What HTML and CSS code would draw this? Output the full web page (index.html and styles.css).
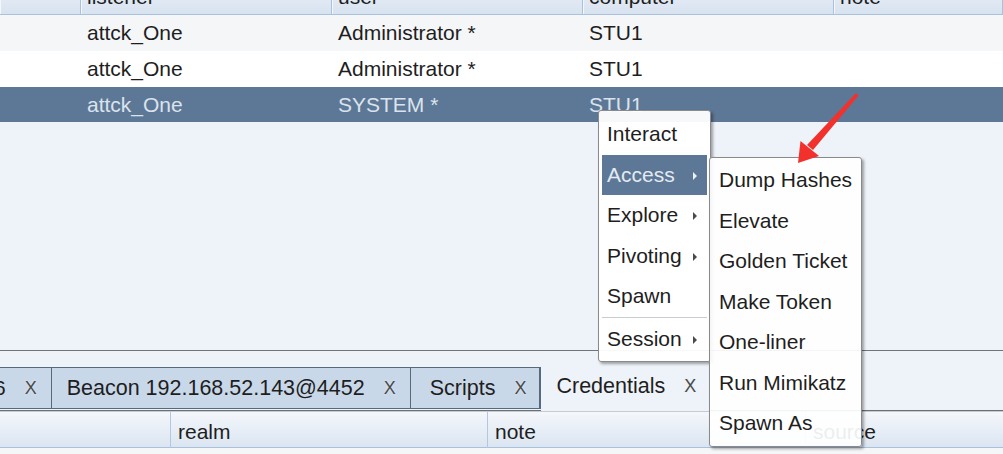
FILE: index.html
```html
<!DOCTYPE html>
<html>
<head>
<meta charset="utf-8">
<link rel="stylesheet" href="styles.css">
</head>
<body>
<div class="app">
  <div class="top-pane">
    <div class="row head">
      <div class="cell"></div>
      <div class="cell">listener</div>
      <div class="cell">user</div>
      <div class="cell">computer</div>
      <div class="cell">note</div>
    </div>
    <div class="row odd">
      <div class="cell"></div>
      <div class="cell">attck_One</div>
      <div class="cell">Administrator *</div>
      <div class="cell">STU1</div>
      <div class="cell"></div>
    </div>
    <div class="row even">
      <div class="cell"></div>
      <div class="cell">attck_One</div>
      <div class="cell">Administrator *</div>
      <div class="cell">STU1</div>
      <div class="cell"></div>
    </div>
    <div class="row selected">
      <div class="cell"></div>
      <div class="cell">attck_One</div>
      <div class="cell">SYSTEM *</div>
      <div class="cell">STU1</div>
      <div class="cell"></div>
    </div>
  </div>
  <div class="bottom-pane">
    <div class="tabstrip">
      <div class="tab first"><span class="tab-label">6</span><span class="tab-x">X</span></div>
      <div class="tab"><span class="tab-label">Beacon 192.168.52.143@4452</span><span class="tab-x">X</span></div>
      <div class="tab scripts"><span class="tab-label">Scripts</span><span class="tab-x">X</span></div>
      <div class="tab active"><span class="tab-label">Credentials</span><span class="tab-x">X</span></div>
    </div>
    <div class="row2 head2">
      <div class="cell2"></div>
      <div class="cell2">realm</div>
      <div class="cell2">note</div>
      <div class="cell2">source</div>
    </div>
  </div>
</div>

<div class="menu main-menu">
  <div class="item">Interact</div>
  <div class="item sub hl">Access<span class="arrow"></span></div>
  <div class="item sub">Explore<span class="arrow"></span></div>
  <div class="item sub">Pivoting<span class="arrow"></span></div>
  <div class="item">Spawn</div>
  <div class="sep"></div>
  <div class="item sub">Session<span class="arrow"></span></div>
</div>

<div class="menu sub-menu">
  <div class="item">Dump Hashes</div>
  <div class="item">Elevate</div>
  <div class="item">Golden Ticket</div>
  <div class="item">Make Token</div>
  <div class="item">One-liner</div>
  <div class="item">Run Mimikatz</div>
  <div class="item">Spawn As</div>
</div>

<svg class="annot" width="1003" height="454" viewBox="0 0 1003 454">
  <polygon points="856,93 858.5,95.5 813,150 807,145" fill="#f2302c"/>
  <polygon points="798,163 800.5,141 819,156" fill="#f2302c"/>
</svg>
</body>
</html>
```
FILE: styles.css
```css
html, body {
  margin: 0;
  padding: 0;
}
body {
  width: 1003px;
  height: 454px;
  overflow: hidden;
  position: relative;
  background: #eef2f9;
  font-family: "Liberation Sans", Arial, sans-serif;
  font-size: 21px;
  color: #1e1e1e;
}
.app {
  display: flex;
  flex-direction: column;
  height: 454px;
}
.top-pane {
  height: 350px;
  flex: 0 0 350px;
  overflow: hidden;
  background: #eef2f9;
  border-bottom: 1px solid #707478;
}
.row {
  display: grid;
  grid-template-columns: 81px 251px 251px 251px 1fr;
}
.row .cell {
  padding-left: 6px;
  white-space: nowrap;
  overflow: hidden;
}
.head {
  margin-top: -15px;
  height: 29px;
  line-height: 24px;
  background: linear-gradient(#e9eff7, #d8e3f0);
  border-bottom: 1px solid #a9c1dd;
}
.head .cell {
  border-right: 1px solid #a9c1dd;
  box-shadow: inset 1px 0 0 #f3f7fb;
}
.odd, .even, .selected {
  height: 36px;
  line-height: 36px;
}
.odd { background: #f5f6f8; }
.even { background: #ffffff; }
.selected {
  background: #5d7896;
  color: #dbe3ec;
  height: 35px;
  line-height: 35px;
}
.bottom-pane {
  flex: 1;
  display: flex;
  flex-direction: column;
}
.tabstrip {
  height: 60px;
  padding-top: 16px;
  box-sizing: border-box;
  display: flex;
  align-items: flex-start;
  border-bottom: 1px solid #6c7075;
  box-shadow: 0 1px 0 #c8ccd2;
}
.tab {
  height: 42px;
  box-sizing: border-box;
  display: flex;
  align-items: center;
  background: #c9d8e9;
  border: 1px solid #566a7e;
  border-left: none;
  padding: 0 14px 0 15px;
  white-space: nowrap;
}
.tab-label {
  font-size: 21.5px;
}
.tab.first {
  margin-left: -6px;
  padding-left: 0;
}
.tab.first .tab-label {
  font-size: 21px;
}
.tab.scripts {
  padding-left: 19px;
  padding-right: 13px;
  border-right-width: 2px;
}
.tab.active {
  background: #eef2f9;
  border: none;
  height: 44px;
  padding-left: 15px;
  padding-bottom: 5px;
}
.tab-x {
  margin-left: 19px;
  font-size: 18px;
  color: #4a4a4a;
  text-shadow: 0 0 2px #e8eef6;
}
.row2 {
  display: grid;
  grid-template-columns: 171px 317px 318px 1fr;
}
.head2 {
  height: 36px;
  line-height: 36px;
  padding-top: 2px;
  box-sizing: border-box;
  margin-top: 1px;
  background: linear-gradient(#f4f7fb, #dbe5f1);
  border-bottom: 1px solid #a9c1dd;
}
.cell2 {
  padding-left: 7px;
  border-right: 1px solid #b3c8e0;
  margin-top: -2px;
  line-height: 40px;
}
.cell2:last-child { border-right: none; }
.bottom-pane::after {
  content: "";
  flex: 1;
  background: #f5f6f8;
}
.menu {
  position: absolute;
  box-sizing: border-box;
  background: rgba(255, 255, 255, 0.95);
  border: 1px solid #8a8a8a;
  border-radius: 3px;
  box-shadow: 2px 2px 3px rgba(0, 0, 0, 0.35);
  color: #1e1e1e;
}
.main-menu {
  left: 598px;
  top: 110px;
  width: 113px;
  height: 252px;
  padding: 3px 3px;
}
.sub-menu {
  left: 709px;
  top: 157px;
  width: 153px;
  height: 290px;
  padding: 2px 0 3px;
  background: rgba(255, 255, 255, 0.92);
}
.item {
  height: 40.5px;
  line-height: 40.5px;
  padding-left: 5px;
  position: relative;
  white-space: nowrap;
}
.sub-menu .item {
  padding-left: 9px;
}
.item.hl {
  background: #5d7896;
  color: #e4eaf1;
}
.arrow {
  position: absolute;
  right: 10px;
  top: 17px;
  width: 0;
  height: 0;
  border-top: 4px solid transparent;
  border-bottom: 4px solid transparent;
  border-left: 4px solid #4a4a4a;
}
.hl .arrow {
  border-left-color: #eef2f7;
}
.sep {
  height: 1px;
  margin: 0 0 1px;
  background: #c9cdd2;
}
.annot {
  position: absolute;
  left: 0;
  top: 0;
  pointer-events: none;
}
```
